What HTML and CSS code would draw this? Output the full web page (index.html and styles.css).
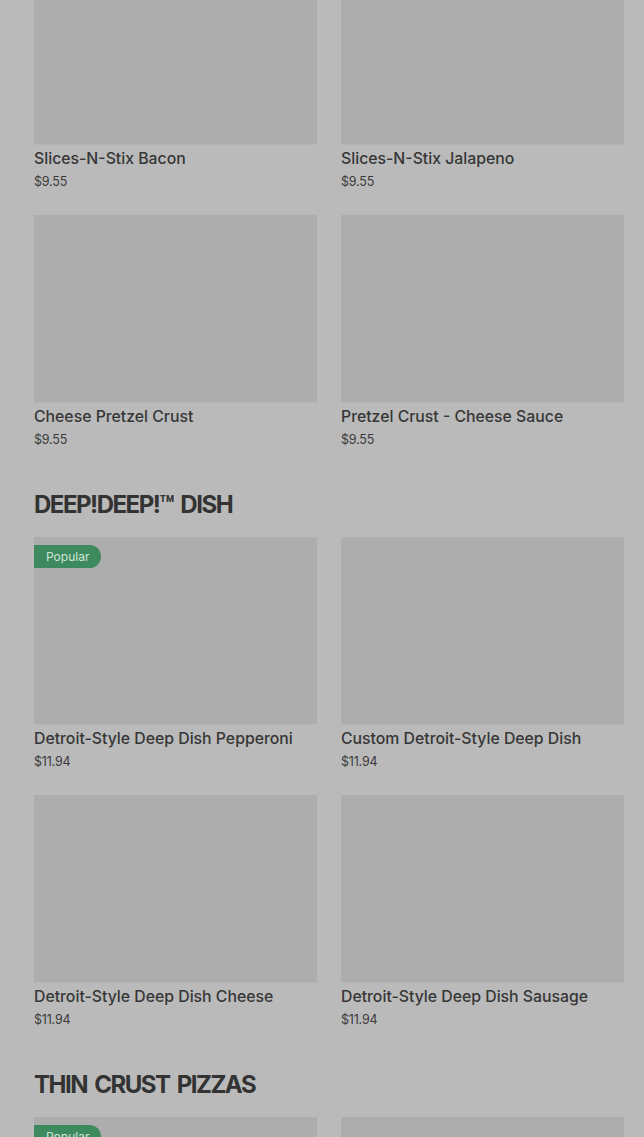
FILE: index.html
```html
<!DOCTYPE html>
<html lang="en">
<head>
  <meta charset="UTF-8" />
  <title>Menu</title>
  <link rel="stylesheet" href="styles.css">
</head>
<body>
  <div class="menu">
    <section class="category first">
      <div class="grid">
        <div class="card">
          <div class="card-image"></div>
          <div class="card-title">Slices-N-Stix Bacon</div>
          <div class="card-price">$9.55</div>
        </div>
        <div class="card">
          <div class="card-image"></div>
          <div class="card-title">Slices-N-Stix Jalapeno</div>
          <div class="card-price">$9.55</div>
        </div>
        <div class="card">
          <div class="card-image"></div>
          <div class="card-title">Cheese Pretzel Crust</div>
          <div class="card-price">$9.55</div>
        </div>
        <div class="card">
          <div class="card-image"></div>
          <div class="card-title">Pretzel Crust - Cheese Sauce</div>
          <div class="card-price">$9.55</div>
        </div>
      </div>
    </section>

    <section class="category">
      <h2>DEEP!DEEP!™ DISH</h2>
      <div class="grid">
        <div class="card">
          <div class="card-image"><span class="badge">Popular</span></div>
          <div class="card-title">Detroit-Style Deep Dish Pepperoni</div>
          <div class="card-price">$11.94</div>
        </div>
        <div class="card">
          <div class="card-image"></div>
          <div class="card-title">Custom Detroit-Style Deep Dish</div>
          <div class="card-price">$11.94</div>
        </div>
        <div class="card">
          <div class="card-image"></div>
          <div class="card-title">Detroit-Style Deep Dish Cheese</div>
          <div class="card-price">$11.94</div>
        </div>
        <div class="card">
          <div class="card-image"></div>
          <div class="card-title">Detroit-Style Deep Dish Sausage</div>
          <div class="card-price">$11.94</div>
        </div>
      </div>
    </section>

    <section class="category">
      <h2>THIN CRUST PIZZAS</h2>
      <div class="grid">
        <div class="card">
          <div class="card-image"><span class="badge">Popular</span></div>
          <div class="card-title">Thin Crust Pepperoni</div>
          <div class="card-price">$11.94</div>
        </div>
        <div class="card">
          <div class="card-image"></div>
          <div class="card-title">Thin Crust Cheese</div>
          <div class="card-price">$11.94</div>
        </div>
      </div>
    </section>
  </div>
</body>
</html>
```

FILE: styles.css
```css
body {
  margin: 0;
  font-family: Inter, "Noto Sans", sans-serif;
  background-color: #bababa;
  color: #353535;
  height: 1137px;
  overflow: hidden;
}

.menu {
  padding: 0 20px 0 34px;
}

.category {
  margin-top: 38px;
}

.category.first {
  margin-top: -43px;
}

.category h2 {
  margin: 0 0 16px;
  padding-top: 1px;
  font-size: 24px;
  line-height: 32px;
  font-weight: 700;
  letter-spacing: -1.5px;
  word-spacing: 3px;
  color: #333;
}

.grid {
  display: grid;
  grid-template-columns: 1fr 1fr;
  column-gap: 24px;
  row-gap: 23px;
}

.card-image {
  position: relative;
  height: 188px;
  background-color: #adadad;
  border-bottom: 1px solid #b4b4b4;
  box-sizing: border-box;
}

.badge {
  position: absolute;
  top: 8px;
  left: 0;
  height: 23px;
  line-height: 23px;
  padding: 0 12px;
  font-size: 12px;
  color: #d3e4d9;
  background-color: #3d8a5f;
  border-radius: 0 12px 12px 0;
}

.card-title {
  margin-top: 4px;
  font-size: 15.8px;
  line-height: 20px;
  font-weight: 500;
  color: #363636;
}

.card-price {
  margin: 4px 0 1px;
  font-size: 12.5px;
  line-height: 18px;
  letter-spacing: -0.2px;
  color: #3a3a3a;
}
```
